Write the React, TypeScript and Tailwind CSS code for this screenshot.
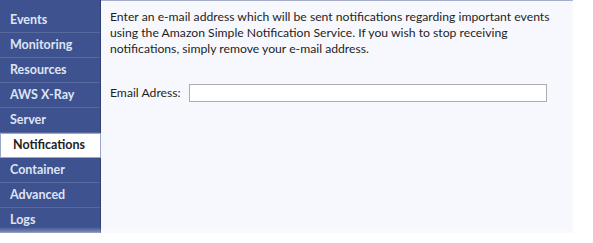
import React from 'react';

const items = ['Events', 'Monitoring', 'Resources', 'AWS X-Ray', 'Server', 'Notifications', 'Container', 'Advanced', 'Logs'];
const selected = 'Notifications';

const App: React.FC = () => {
  return (
    <div className="relative w-[593px] h-[243px] overflow-hidden bg-white" style={{ fontFamily: 'Lato, "Liberation Sans", sans-serif' }}>
      <div className="flex w-[573px] h-[233px]">
        {/* Sidebar */}
        <nav className="w-[101px] shrink-0 bg-[#3e5290] pt-[8px] border-r border-[#2f3f70]">
          {items.map(item =>
            item === selected ? (
              <div key={item} className="h-[25px] flex items-center pl-[12px] bg-white text-[#1e1e1e] text-[12.5px] font-bold border border-[#9aa6c8] mr-[-1px]">
                {item}
              </div>
            ) : (
              <div key={item} className="h-[25px] flex items-center pl-[10px] text-[#dde4f6] text-[12.5px] font-bold border-b border-[#5869a0]">
                {item}
              </div>
            )
          )}
        </nav>

        {/* Content */}
        <main className="flex-1 bg-[#f7f8fd] border-t border-[#a3acc9] px-[9px] pt-[8px] text-[12.2px] leading-[16px] text-[#1e1e1e]">
          <p>
            Enter an e-mail address which will be sent notifications regarding important events using the Amazon Simple Notification Service. If you wish to stop receiving notifications, simply remove your e-mail address.
          </p>
          <div className="flex items-center mt-[27px]">
            <label className="w-[79px]">Email Adress:</label>
            <input type="text" className="w-[358px] h-[18px] bg-white border border-[#abadb3] outline-none" />
          </div>
        </main>
      </div>

      {/* fades */}
      <div className="absolute left-0 right-0 bottom-0 h-[16px] bg-gradient-to-b from-transparent to-white" />
      <div className="absolute top-0 bottom-0 right-0 w-[24px] bg-gradient-to-r from-transparent to-white" />
    </div>
  );
};

export default App;
